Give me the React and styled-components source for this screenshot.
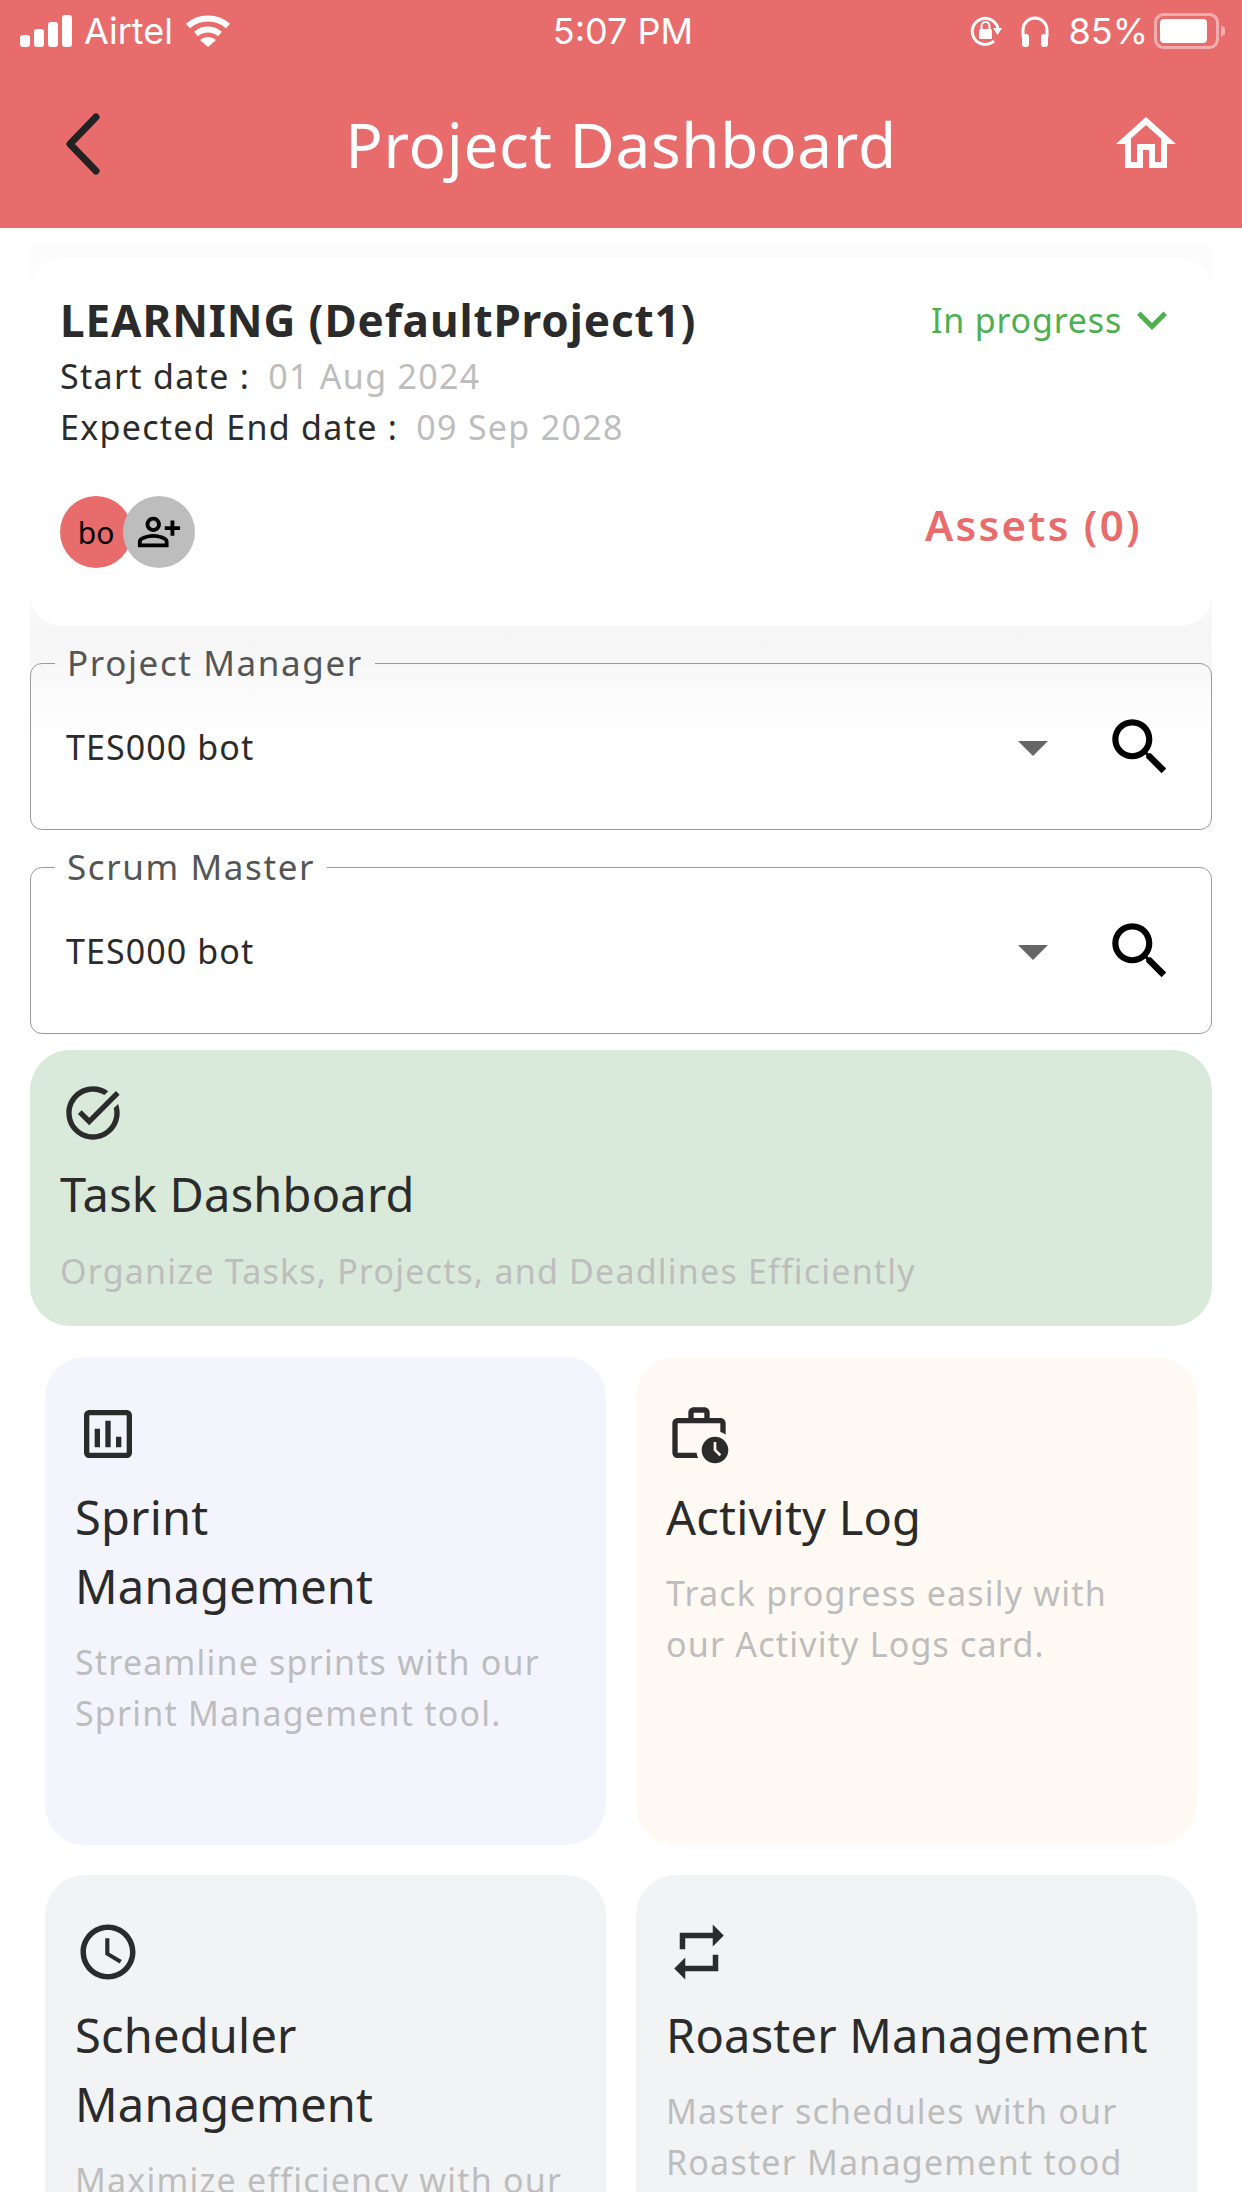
import styled, { createGlobalStyle } from "styled-components";
import {
  MdOutlineHome,
  MdSearch,
  MdArrowDropDown,
  MdOutlinePersonAddAlt,
  MdOutlineTaskAlt,
  MdOutlineAssessment,
  MdOutlineWorkHistory,
  MdAccessTime,
  MdRepeat,
  MdKeyboardArrowDown,
} from "react-icons/md";

const UI_FONT = `"Noto Sans", "Open Sans", sans-serif`;

const GlobalStyle = createGlobalStyle`
  html, body { margin: 0; padding: 0; background: #fff; }
  * { box-sizing: border-box; }
`;

const Page = styled.div`
  width: 1242px;
  height: 2192px;
  overflow: hidden;
  background: #fff;
  font-family: ${UI_FONT};
  color: #2b2b2b;
`;

const Header = styled.header`
  height: 228px;
  background: #e86c6c;
  color: #fff;
`;

const StatusBar = styled.div`
  height: 62px;
  padding: 0 16px 0 20px;
  display: grid;
  grid-template-columns: 1fr auto 1fr;
  align-items: center;
  font-family: "Inter", "Liberation Sans", sans-serif;
  font-size: 36px;
`;

const StatusLeft = styled.div`
  display: flex;
  align-items: center;
  gap: 12px;
`;

const StatusRight = styled.div`
  display: flex;
  align-items: center;
  justify-content: flex-end;
  gap: 18px;
`;

const Percent = styled.span`
  margin-right: -12px;
`;

const NavBar = styled.div`
  height: 166px;
  padding: 0 60px 3px 60px;
  display: grid;
  grid-template-columns: 1fr auto 1fr;
  align-items: center;
`;

const HomeLink = styled.div`
  justify-self: end;
  display: flex;
`;

const NavTitle = styled.h1`
  margin: 0;
  font-size: 62px;
  font-weight: 400;
  line-height: 1;
  letter-spacing: 0.7px;
`;

const Content = styled.main`
  padding: 17px 30px 0;
`;

const Band = styled.div`
  padding-top: 13px;
  margin-bottom: 19px;
  background: linear-gradient(
    to bottom,
    #fcfcfc 0,
    #f8f8f8 370px,
    #f5f5f5 395px,
    #fafafa 440px,
    #fff 500px
  );
`;

const ProjectCard = styled.section`
  height: 368px;
  margin-bottom: 19px;
  padding: 36px 30px 0;
  background: #fff;
  border-radius: 32px;
`;

const CardTop = styled.div`
  display: flex;
  justify-content: space-between;
  align-items: center;
  height: 52px;
  margin-bottom: 4px;
`;

const ProjectName = styled.h2`
  margin: 0;
  font-size: 44px;
  font-weight: 700;
  letter-spacing: 0.9px;
`;

const Status = styled.div`
  display: flex;
  align-items: center;
  color: #4caf50;
  font-size: 34px;
  letter-spacing: 0.8px;
`;

const DateRow = styled.div`
  height: 51px;
  display: flex;
  align-items: center;
  gap: 18px;
  font-size: 34px;
  letter-spacing: 1.3px;
`;

const DateValue = styled.span`
  color: #bdbdbd;
`;

const CardBottom = styled.div`
  margin-top: 44px;
  display: flex;
  justify-content: space-between;
  align-items: flex-start;
`;

const Avatars = styled.div`
  display: flex;
`;

const Avatar = styled.div`
  width: 72px;
  height: 72px;
  border-radius: 50%;
  display: flex;
  align-items: center;
  justify-content: center;
  background: ${(p) => p.$bg};
  color: #000;
  font-size: 30px;
  & + & { margin-left: -9px; }
`;

const Assets = styled.div`
  padding-right: 40px;
  color: #e86c6c;
  font-size: 42px;
  font-weight: 600;
  letter-spacing: 2.3px;
`;

const Field = styled.fieldset`
  height: 185px;
  margin: 0;
  padding: 0;
  min-width: 0;
  border: 1.5px solid #9a9a9a;
  border-radius: 12px;
`;

const FieldLegend = styled.legend`
  margin-left: 24px;
  padding: 0 12px;
  height: 36px;
  line-height: 36px;
  font-size: 35px;
  letter-spacing: 1.6px;
  color: #555;
`;

const FieldRow = styled.div`
  height: 132px;
  padding: 0 34px 0 35px;
  display: flex;
  align-items: center;
  justify-content: space-between;
`;

const FieldValue = styled.span`
  font-size: 34px;
  letter-spacing: 1.1px;
`;

const FieldIcons = styled.div`
  display: flex;
  align-items: center;
  gap: 34px;
`;

const Tile = styled.article`
  background: ${(p) => p.$bg};
  border-radius: 40px;
  padding: ${(p) => p.$pad};
`;

const TaskTile = styled(Tile)`
  height: 276px;
  margin-top: 16px;
`;

const TileGrid = styled.div`
  margin: 31px 15px 0;
  display: grid;
  grid-template-columns: 1fr 1fr;
  grid-auto-rows: 488px;
  gap: 30px;
`;

const TileIcon = styled.div`
  height: ${(p) => p.$h}px;
  display: flex;
  align-items: center;
  margin-left: ${(p) => p.$ml}px;
  color: #2b2b2b;
`;

const TileTitle = styled.h3`
  margin: ${(p) => p.$mt}px 0 0;
  font-size: 47px;
  font-weight: 400;
  line-height: 69px;
  letter-spacing: 0.2px;
`;

const TileText = styled.p`
  margin: ${(p) => p.$mt}px 0 0;
  font-size: 34px;
  line-height: 51px;
  letter-spacing: 1.2px;
  color: #bdbdbd;
`;

function Signal() {
  return (
    <svg width="52" height="32" viewBox="0 0 52 32" fill="#fff">
      <rect x="0" y="20" width="10" height="12" rx="3" />
      <rect x="14" y="14" width="10" height="18" rx="3" />
      <rect x="28" y="7" width="10" height="25" rx="3" />
      <rect x="42" y="0" width="10" height="32" rx="3" />
    </svg>
  );
}

function Wifi() {
  return (
    <svg width="46" height="32" viewBox="0 0 46 32" fill="none" stroke="#fff" strokeWidth="6">
      <path d="M3 11 C14 1 32 1 43 11" />
      <path d="M11 19 C18 13 28 13 35 19" />
      <path d="M15 25 L23 32 L31 25 C26 21 20 21 15 25 Z" fill="#fff" stroke="none" />
    </svg>
  );
}

function RotationLock() {
  return (
    <svg width="32" height="32" viewBox="0 0 32 32" fill="none">
      <path d="M28 14 A13 13 0 1 0 24 26" stroke="#fff" strokeWidth="3" />
      <path d="M23 13 L32 13 L27.5 20 Z" fill="#fff" />
      <rect x="9" y="14" width="13" height="10" rx="1.5" fill="#fff" />
      <path d="M11.5 14 V11 a4 4 0 0 1 8 0 V14" stroke="#fff" strokeWidth="2" />
    </svg>
  );
}

function Headphones() {
  return (
    <svg width="30" height="32" viewBox="0 0 30 32" fill="none">
      <path d="M3 22 V15 a12 12 0 0 1 24 0 V22" stroke="#fff" strokeWidth="3" />
      <rect x="2" y="19" width="7" height="13" rx="3" fill="#fff" />
      <rect x="21" y="19" width="7" height="13" rx="3" fill="#fff" />
    </svg>
  );
}

function Battery() {
  return (
    <svg width="72" height="36" viewBox="0 0 72 36">
      <rect x="1.5" y="1.5" width="62" height="33" rx="8" fill="none" stroke="#fff" strokeOpacity="0.45" strokeWidth="3" />
      <rect x="6" y="6" width="47" height="24" rx="4" fill="#fff" />
      <path d="M67 12 L71 15 V21 L67 24 Z" fill="#fff" fillOpacity="0.45" />
    </svg>
  );
}

function BackChevron() {
  return (
    <svg width="40" height="64" viewBox="0 0 40 64" fill="none" stroke="#222" strokeWidth="7" strokeLinecap="round" strokeLinejoin="round">
      <path d="M36 5 L10 32 L36 59" />
    </svg>
  );
}

const tiles = [
  {
    bg: "#f4f4fd",
    icon: <MdOutlineAssessment size={64} />,
    iconLeft: 1,
    title: <>Sprint<br />Management</>,
    text: <>Streamline sprints with our<br />Sprint Management tool.</>,
  },
  {
    bg: "#fef9f3",
    icon: <MdOutlineWorkHistory size={64} />,
    iconLeft: 1,
    title: "Activity Log",
    text: <>Track progress easily with<br />our Activity Logs card.</>,
  },
  {
    bg: "#f2f3f5",
    icon: <MdAccessTime size={66} />,
    iconLeft: 0,
    title: <>Scheduler<br />Management</>,
    text: "Maximize efficiency with our",
  },
  {
    bg: "#f2f3f5",
    icon: <MdRepeat size={66} />,
    iconLeft: 0,
    title: "Roaster Management",
    text: <>Master schedules with our<br />Roaster Management tood</>,
  },
];

function SelectField({ label, value }) {
  return (
    <Field>
      <FieldLegend>{label}</FieldLegend>
      <FieldRow>
        <FieldValue>{value}</FieldValue>
        <FieldIcons>
          <MdArrowDropDown size={72} color="#666" />
          <MdSearch size={74} color="#000" />
        </FieldIcons>
      </FieldRow>
    </Field>
  );
}

export default function App() {
  return (
    <Page>
      <GlobalStyle />
      <Header>
        <StatusBar>
          <StatusLeft>
            <Signal />
            <span>Airtel</span>
            <Wifi />
          </StatusLeft>
          <span>5:07 PM</span>
          <StatusRight>
            <RotationLock />
            <Headphones />
            <Percent>85%</Percent>
            <Battery />
          </StatusRight>
        </StatusBar>
        <NavBar>
          <BackChevron />
          <NavTitle>Project Dashboard</NavTitle>
          <HomeLink>
            <MdOutlineHome size={72} />
          </HomeLink>
        </NavBar>
      </Header>
      <Content>
        <Band>
          <ProjectCard>
            <CardTop>
              <ProjectName>LEARNING (DefaultProject1)</ProjectName>
              <Status>
                In progress <MdKeyboardArrowDown size={60} />
              </Status>
            </CardTop>
            <DateRow>
              Start date : <DateValue>01 Aug 2024</DateValue>
            </DateRow>
            <DateRow>
              Expected End date : <DateValue>09 Sep 2028</DateValue>
            </DateRow>
            <CardBottom>
              <Avatars>
                <Avatar $bg="#e86c6c">bo</Avatar>
                <Avatar $bg="#bdbdbd">
                  <MdOutlinePersonAddAlt size={46} />
                </Avatar>
              </Avatars>
              <Assets>Assets (0)</Assets>
            </CardBottom>
          </ProjectCard>
          <SelectField label="Project Manager" value="TES000 bot" />
        </Band>
        <SelectField label="Scrum Master" value="TES000 bot" />
        <TaskTile $bg="#d9e9da" $pad="30px 30px 0">
          <TileIcon $h={66} $ml={1}>
            <MdOutlineTaskAlt size={64} />
          </TileIcon>
          <TileTitle $mt={14}>Task Dashboard</TileTitle>
          <TileText $mt={17}>Organize Tasks, Projects, and Deadlines Efficiently</TileText>
        </TaskTile>
        <TileGrid>
          {tiles.map((t, i) => (
            <Tile key={i} $bg={t.bg} $pad="44px 30px 0">
              <TileIcon $h={66} $ml={t.iconLeft}>{t.icon}</TileIcon>
              <TileTitle $mt={16}>{t.title}</TileTitle>
              <TileText $mt={16}>{t.text}</TileText>
            </Tile>
          ))}
        </TileGrid>
      </Content>
    </Page>
  );
}
